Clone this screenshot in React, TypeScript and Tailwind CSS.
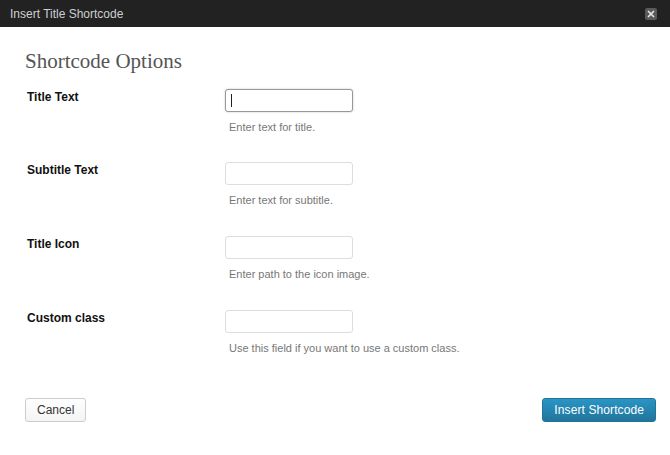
import React from "react";

const rows = [
  { label: "Title Text", help: "Enter text for title.", focus: true },
  { label: "Subtitle Text", help: "Enter text for subtitle." },
  { label: "Title Icon", help: "Enter path to the icon image." },
  { label: "Custom class", help: "Use this field if you want to use a custom class." },
];

export default function App() {
  return (
    <div className="w-[670px] h-[455px] bg-white flex flex-col" style={{ fontFamily: '"Liberation Sans", Arial, sans-serif' }}>
      <div className="h-[27px] bg-[#222222] flex items-center justify-between pl-[10px] pr-[13px]">
        <span className="text-[12px] text-[#cfcfcf]">Insert Title Shortcode</span>
        <div className="w-[12px] h-[12px] bg-[#5a5a5a] rounded-[2px] flex items-center justify-center">
          <svg width="8" height="8" viewBox="0 0 8 8">
            <path d="M1 1L7 7M7 1L1 7" stroke="#e8e8e8" strokeWidth="1.6" />
          </svg>
        </div>
      </div>
      <div className="flex flex-col px-[25px] pt-[21px]">
        <h2 className="text-[21px] leading-[27px] text-[#555555]" style={{ fontFamily: 'Georgia, "Liberation Serif", serif' }}>
          Shortcode Options
        </h2>
        <div className="flex flex-col mt-[14px]">
          {rows.map((r, i) => (
            <div key={r.label} className={i === 0 ? "flex mb-[28px]" : i < 3 ? "flex mb-[29px]" : "flex"}>
              <div className="w-[200px] pl-[2px] pt-[1px] text-[12px] leading-[14px] font-bold text-[#111111]">{r.label}</div>
              <div className="flex flex-col">
                <div
                  className={
                    "w-[128px] h-[23px] rounded-[3px] bg-white flex items-center pl-[5px] " +
                    (r.focus ? "border border-[#999999] shadow-[0_0_2px_rgba(0,0,0,0.25)]" : "border border-[#dddddd]")
                  }
                >
                  {r.focus && <div className="w-[1px] h-[13px] bg-[#222222]" />}
                </div>
                <div className="mt-[9px] pl-[4px] text-[11px] leading-[13px] text-[#777777]">{r.help}</div>
              </div>
            </div>
          ))}
        </div>
        <div className="flex justify-between mt-[43px]">
          <button className="h-[24px] px-[11px] rounded-[3px] border border-[#cccccc] bg-gradient-to-b from-[#fefefe] to-[#f4f4f4] text-[12px] text-[#333333]">
            Cancel
          </button>
          <button className="h-[24px] px-[11px] -mr-[11px] rounded-[3px] border border-[#21759b] bg-gradient-to-b from-[#2a95c5] to-[#21759b] text-[12px] tracking-[0.1px] text-white">
            Insert Shortcode
          </button>
        </div>
      </div>
    </div>
  );
}
